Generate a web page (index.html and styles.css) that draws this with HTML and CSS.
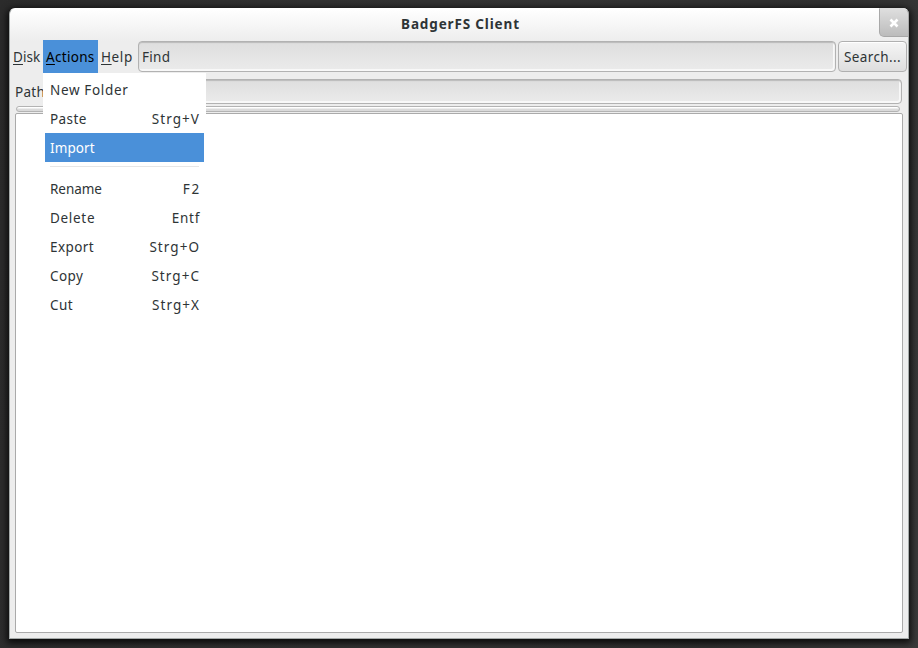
FILE: index.html
```
<!DOCTYPE html>
<html lang="en">
<head>
<meta charset="utf-8">
<title>BadgerFS Client</title>
<link rel="stylesheet" href="styles.css">
</head>
<body>
<main class="window">
  <header class="titlebar">
    <h1 class="title">BadgerFS Client</h1>
    <button class="close" aria-label="Close"><svg width="10" height="10" viewBox="0 0 10 10"><path d="M1.5 1.5 8.5 8.5M8.5 1.5 1.5 8.5" fill="none" stroke="#fff" stroke-width="2.6"/></svg></button>
  </header>
  <div class="toolbar">
    <nav class="menubar">
      <span class="menu disk"><u>D</u>isk</span>
      <div class="menu actions"><span><u>A</u>ctions</span>
        <div class="dropdown">
          <div class="item folder"><span>New Folder</span></div>
          <div class="item"><span>Paste</span><kbd>Strg+V</kbd></div>
          <div class="item selected"><span>Import</span></div>
          <div class="separator"></div>
          <div class="item rename"><span>Rename</span><kbd class="fkey">F2</kbd></div>
          <div class="item delete"><span>Delete</span><kbd class="del">Entf</kbd></div>
          <div class="item"><span>Export</span><kbd>Strg+O</kbd></div>
          <div class="item"><span>Copy</span><kbd>Strg+C</kbd></div>
          <div class="item"><span>Cut</span><kbd>Strg+X</kbd></div>
        </div>
      </div>
      <span class="menu help"><u>H</u>elp</span>
    </nav>
    <div class="entry find">Find</div>
    <button class="search">Search...</button>
  </div>
  <div class="pathrow">
    <span class="pathlabel">Path</span>
    <div class="entry path"></div>
  </div>
  <div class="handle"></div>
  <section class="view"></section>
</main>
</body>
</html>
```
FILE: styles.css
```
* { box-sizing: border-box; }
body {
  margin: 0;
  height: 648px;
  overflow: hidden;
  padding: 8px 9px 9px;
  background: linear-gradient(100deg, #2b2b2b, #323232 30%, #343434 55%, #303030 80%, #3a3a3a);
  font: 13.5px/20px "Noto Sans", sans-serif;
  letter-spacing: .3px;
  color: #2e3436;
}
.window {
  display: flex;
  flex-direction: column;
  height: 631px;
  border: 1px solid #a5aaa9;
  border-top-color: #fff;
  border-radius: 6px 6px 0 0;
  background: linear-gradient(#fff 0, #ededed 32px);
  box-shadow: 0 2px 7px 2px rgba(0,0,0,.8);
}
.titlebar {
  display: flex;
  justify-content: center;
  height: 31px;
  position: relative;
}
.title {
  margin: 5px 0 0 3px;
  font-size: 13.5px;
  line-height: 20px;
  letter-spacing: .85px;
}
.close {
  position: absolute;
  right: -1px;
  top: -1px;
  width: 30px;
  height: 29px;
  padding: 0 1px 0 0;
  display: grid;
  place-items: center;
  border: 1px solid #a8a8a8;
  border-top-color: #ddd;
  border-radius: 0 6px 0 5px;
  background: linear-gradient(#dedede, #bcbcbc);
}
.toolbar {
  display: flex;
  height: 33px;
  padding: 1px 1px 1px 2px;
}
.menubar { display: flex; width: 126px; margin: -1px 0; }
.menu { height: 33px; padding-top: 7px; white-space: nowrap; }
.menu u { text-underline-offset: 2px; text-decoration-thickness: 1px; }
.disk { width: 31px; padding-left: 1px; letter-spacing: .1px; }
.actions {
  position: relative;
  width: 55px;
  padding-left: 3px;
  background: #4a90d9;
  color: #000;
}
.help { padding-left: 3px; letter-spacing: .6px; }
.dropdown {
  position: absolute;
  z-index: 2;
  left: 0;
  top: 33px;
  width: 163px;
  height: 249px;
  padding: 2px;
  background: #fff;
  color: #2e3436;
  letter-spacing: .4px;
}
.item {
  display: flex;
  justify-content: space-between;
  height: 29px;
  padding: 5px 5px 0;
}
.item kbd { margin-right: -1px; font: inherit; letter-spacing: 1.05px; }
.item .fkey { letter-spacing: 1.8px; margin-right: -2px; }
.item .del { letter-spacing: .7px; }
.folder { letter-spacing: .65px; }
.rename { letter-spacing: -.05px; }
.delete { letter-spacing: .7px; }
.selected { background: #4a90d9; color: #fff; letter-spacing: .1px; }
.separator { height: 1px; margin: 4px 5px 7px; background: #e6e6e6; }
.entry {
  border: 1px solid #b2b2b2;
  border-radius: 4px;
  background: linear-gradient(#dedede, #ebebeb);
  box-shadow: inset 0 1px 1px #bbb, inset -1px -1px 0 1px #f8f8f8;
}
.find { width: 698px; height: 31px; padding: 5px 3px; }
.search {
  width: 69px;
  height: 31px;
  margin-left: 2px;
  padding: 0;
  border: 1px solid #b0b0b0;
  border-radius: 4px;
  background: linear-gradient(#f5f5f5, #dedede);
  box-shadow: inset 0 1px #fff;
  font: inherit;
  letter-spacing: .4px;
  color: inherit;
}
.pathrow { display: flex; height: 33px; padding: 6px 6px 0 5px; }
.pathlabel { width: 35px; padding-top: 3px; }
.path { flex: 1; height: 25px; }
.handle {
  width: 884px;
  height: 6px;
  margin-left: 6px;
  border: 1px solid #b3b3b3;
  border-radius: 3px;
  background: linear-gradient(#fff 1px, #dadada 2px, #dadada);
}
.view {
  flex: 1;
  margin: 1px 5px 5px;
  border: 1px solid #aaa;
  border-radius: 2px;
  background: #fff;
}
```
